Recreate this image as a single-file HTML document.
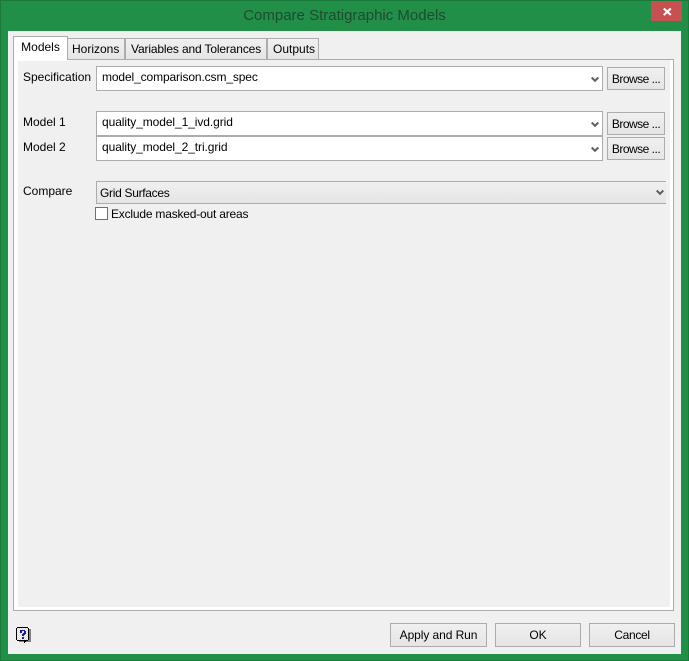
<!DOCTYPE html>
<html><head><meta charset="utf-8">
<style>
html,body{margin:0;padding:0;}
body{width:689px;height:661px;position:relative;overflow:hidden;background:#228f49;font-family:"Liberation Sans",sans-serif;font-size:12px;color:#000;}
div{position:absolute;box-sizing:border-box;white-space:nowrap;}
.frame{left:0;top:0;width:689px;height:661px;border:1px solid #1a7a3c;}
.client{left:8px;top:31px;width:673px;height:623px;background:#f0f0f0;}
.pane{left:13px;top:59px;width:661px;height:552px;background:#f0f0f0;border:1px solid #acacac;}
.inner{left:18px;top:60px;width:652px;height:547px;background:#f0f0f0;}
.w1{background:#fff;}
.tab{height:21px;top:38px;background:linear-gradient(#f0f0f0,#e5e5e5);border:1px solid #acacac;border-bottom:none;line-height:21px;}
.lab{left:23px;line-height:14px;height:14px;}
.combo{left:96px;width:507px;height:25px;background:#fff;border:1px solid #acacac;padding-left:5px;line-height:21px;}
.btn{background:linear-gradient(#f0f0f0,#e5e5e5);border:1px solid #acacac;text-align:center;}
.br{left:607px;width:58px;height:23px;line-height:22px;letter-spacing:-.5px;}
.bb{top:623px;height:24px;line-height:22px;}
svg{position:absolute;display:block;}
</style></head>
<body>
<div class="frame"></div>
<div style="left:0;top:7px;width:689px;text-align:center;font-size:15px;line-height:17px;color:#1f4a30;">Compare Stratigraphic Models</div>
<div style="left:651px;top:1px;width:31px;height:20px;background:#c75050;"></div>
<svg style="left:661px;top:6px" width="13" height="10" viewBox="0 0 13 10"><path d="M2.8 2.500L9.800 9M9.800 2.500L2.800 9" stroke="#fff" stroke-width="2.200" fill="none"/></svg>
<div class="client"></div>
<div class="pane"></div>
<div class="w1" style="left:14px;top:60px;width:659px;height:550px;"></div>
<div class="inner"></div>

<div class="tab" style="left:67px;width:58px;padding-left:4px;">Horizons</div>
<div class="tab" style="left:125px;width:142px;padding-left:5px;letter-spacing:-.15px;">Variables and Tolerances</div>
<div class="tab" style="left:267px;width:52px;padding-left:5px;">Outputs</div>
<div style="left:13px;top:36px;width:55px;height:25px;background:#fff;border:1px solid #acacac;border-bottom:none;line-height:21px;text-align:center;">Models</div>
<div style="left:18px;top:60px;width:50px;height:1px;background:#fff;"></div>

<div class="lab" style="top:70px;">Specification</div>
<div class="combo" style="top:66px;letter-spacing:-.12px;">model_comparison.csm_spec</div>
<div class="btn br" style="top:67px;">Browse ...</div>

<div class="lab" style="top:115px;">Model 1</div>
<div class="combo" style="top:111px;letter-spacing:-.08px;">quality_model_1_ivd.grid</div>
<div class="btn br" style="top:112px;">Browse ...</div>

<div class="lab" style="top:140px;">Model 2</div>
<div class="combo" style="top:136px;letter-spacing:-.08px;">quality_model_2_tri.grid</div>
<div class="btn br" style="top:137px;">Browse ...</div>

<div class="lab" style="top:184px;">Compare</div>
<div style="left:96px;top:181px;width:570px;height:23px;background:linear-gradient(#f0f0f0,#e5e5e5);border-top:1px solid #acacac;border-bottom:1px solid #acacac;border-left:1px solid #acacac;padding-left:3px;line-height:22px;letter-spacing:-.3px;">Grid Surfaces</div>

<svg style="left:591px;top:76px" width="8" height="7" viewBox="0 0 8 7"><path d="M.7 1.500L4 4.800L7.300 1.500" stroke="#606060" stroke-width="2" fill="none"/></svg>
<svg style="left:591px;top:121px" width="8" height="7" viewBox="0 0 8 7"><path d="M.7 1.500L4 4.800L7.300 1.500" stroke="#606060" stroke-width="2" fill="none"/></svg>
<svg style="left:591px;top:146px" width="8" height="7" viewBox="0 0 8 7"><path d="M.7 1.500L4 4.800L7.300 1.500" stroke="#606060" stroke-width="2" fill="none"/></svg>
<svg style="left:656px;top:189px" width="8" height="7" viewBox="0 0 8 7"><path d="M.7 1.500L4 4.800L7.300 1.500" stroke="#606060" stroke-width="2" fill="none"/></svg>

<div style="left:95px;top:207px;width:13px;height:13px;background:#fff;border:1px solid #707070;"></div>
<div style="left:111px;top:207px;line-height:14px;letter-spacing:-.2px;">Exclude masked-out areas</div>

<svg style="left:16px;top:627px" width="16" height="17" viewBox="0 0 16 17" shape-rendering="crispEdges">
<defs><pattern id="d" width="2" height="2" patternUnits="userSpaceOnUse"><rect width="2" height="2" fill="#fff"/><rect width="1" height="1" fill="#f4e83a"/><rect x="1" y="1" width="1" height="1" fill="#f4e83a"/></pattern></defs>
<rect x="13" y="2" width="2" height="13" fill="#808080"/>
<rect x="3" y="13" width="12" height="2" fill="#808080"/>
<rect x="1" y="0" width="11" height="1" fill="#000"/>
<rect x="1" y="13" width="11" height="1" fill="#000"/>
<rect x="0" y="1" width="1" height="12" fill="#000"/>
<rect x="12" y="1" width="1" height="12" fill="#000"/>
<rect x="1" y="1" width="11" height="12" fill="url(#d)"/>
<path d="M8 14H10V15H9V16H8Z" fill="#000"/>
<path d="M4 3H9V4H10V7H9V8H8V9H6V7H7V6H8V4H6V6H4Z" fill="#1a1a9a"/>
<rect x="6" y="10" width="2" height="2" fill="#1a1a9a"/>
</svg>

<div class="btn bb" style="left:390px;width:97px;letter-spacing:-.08px;">Apply and Run</div>
<div class="btn bb" style="left:495px;width:86px;">OK</div>
<div class="btn bb" style="left:589px;width:86px;letter-spacing:-.3px;">Cancel</div>
</body></html>
